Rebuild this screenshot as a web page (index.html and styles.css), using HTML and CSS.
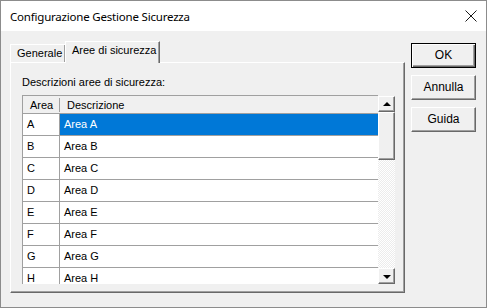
FILE: index.html
```html
<!DOCTYPE html>
<html lang="it">
<head>
<meta charset="utf-8">
<title>Configurazione Gestione Sicurezza</title>
<link rel="stylesheet" href="styles.css">
</head>
<body>
<div class="window">
  <div class="titlebar">
    <span class="title">Configurazione Gestione Sicurezza</span>
    <svg class="close" width="12" height="12" viewBox="0 0 12 12">
      <path d="M0.5 0.5 L11.5 11.5 M11.5 0.5 L0.5 11.5" stroke="#1a1a1a" stroke-width="1" fill="none"/>
    </svg>
  </div>
  <div class="client">
    <div class="tabarea">
      <div class="tabs">
        <div class="tab">Generale</div>
        <div class="tab active">Aree di sicurezza</div>
      </div>
      <div class="page">
        <div class="caption">Descrizioni aree di sicurezza:</div>
        <div class="list">
          <div class="grid">
            <div class="hdr first">Area</div>
            <div class="hdr">Descrizione</div>
            <div class="cell key">A</div><div class="cell sel">Area A</div>
            <div class="cell key">B</div><div class="cell">Area B</div>
            <div class="cell key">C</div><div class="cell">Area C</div>
            <div class="cell key">D</div><div class="cell">Area D</div>
            <div class="cell key">E</div><div class="cell">Area E</div>
            <div class="cell key">F</div><div class="cell">Area F</div>
            <div class="cell key">G</div><div class="cell">Area G</div>
            <div class="cell key">H</div><div class="cell">Area H</div>
          </div>
          <div class="vscroll">
            <div class="sbtn"><span class="arrow up"></span></div>
            <div class="thumb"></div>
            <div class="track"></div>
            <div class="sbtn"><span class="arrow down"></span></div>
          </div>
        </div>
      </div>
    </div>
    <div class="buttons">
      <div class="btn default">OK</div>
      <div class="btn">Annulla</div>
      <div class="btn">Guida</div>
    </div>
  </div>
</div>
</body>
</html>
```

FILE: styles.css
```css
body {
  margin: 0;
  background: #6a6a70;
  font-family: "Liberation Sans", Arial, sans-serif;
  font-size: 11px;
  color: #000;
}

.window {
  width: 485px;
  height: 306px;
  background: #f0f0f0;
  border: 1px solid #8c8c8c;
  overflow: hidden;
}

.titlebar {
  height: 30px;
  background: #fff;
  display: flex;
  align-items: center;
  justify-content: space-between;
  padding: 0 10px 0 9px;
}
.title {
  font-family: "Noto Sans", "Open Sans", sans-serif;
  font-size: 11.5px;
  color: #000;
  letter-spacing: -0.2px;
}
.close {
  margin-right: -1px;
}

.client {
  display: flex;
  padding: 10px 0 0 9px;
}

.tabarea {
  width: 395px;
}
.tabs {
  display: flex;
  align-items: flex-end;
  height: 21px;
}
.tab {
  height: 17px;
  line-height: 17px;
  padding: 0 6px;
  border-top: 1px solid #fff;
  border-left: 1px solid #fff;
  box-shadow: inset -1px 0 0 #a0a0a0;
  width: 42px;
  white-space: nowrap;
  position: relative;
}
.tab.active {
  height: 21px;
  line-height: 17px;
  width: 81px;
  padding: 0 6px;
  margin-bottom: -1px;
  z-index: 1;
  background: #f0f0f0;
  border-right: 1px solid #696969;
  box-shadow: inset -1px 0 0 #a0a0a0;
}

.page {
  border-top: 1px solid #fff;
  border-left: 1px solid #fff;
  border-right: 1px solid #696969;
  border-bottom: 1px solid #696969;
  box-shadow: inset -1px -1px 0 #a0a0a0;
  padding: 13px 9px 0 11px;
  height: 216px;
}
.caption {
  height: 13px;
  line-height: 13px;
  margin-bottom: 6px;
}

.list {
  display: flex;
  height: 189px;
}
.grid {
  flex: 1;
  display: grid;
  grid-template-columns: 37px 1fr;
  grid-template-rows: 18px;
  grid-auto-rows: 22px;
  border-top: 1px solid #a0a0a0;
  border-left: 1px solid #a0a0a0;
  overflow: hidden;
  background: #fff;
}
.hdr {
  background: #f0f0f0;
  border-bottom: 1px solid #a0a0a0;
  height: 16px;
  line-height: 17px;
  padding: 1px 0 0 7px;
  position: relative;
}
.hdr.first {
  padding-left: 0;
  text-align: center;
}
.hdr.first::after {
  content: "";
  position: absolute;
  right: 0;
  top: 2px;
  height: 14px;
  border-right: 1px solid #a0a0a0;
}
.cell {
  border-bottom: 1px solid #a0a0a0;
  line-height: 21px;
  padding-left: 4px;
  height: 21px;
}
.cell.key {
  border-right: 1px solid #a0a0a0;
}
.cell.sel {
  background: #0078d7;
  color: #fff;
}

.vscroll {
  width: 17px;
  margin-top: 1px;
  display: flex;
  flex-direction: column;
}
.sbtn,
.thumb {
  background: #f0f0f0;
  border-top: 1px solid #fff;
  border-left: 1px solid #fff;
  border-right: 1px solid #696969;
  border-bottom: 1px solid #696969;
  box-shadow: inset -1px -1px 0 #a0a0a0;
}
.sbtn {
  height: 14px;
  display: flex;
  align-items: center;
  justify-content: center;
}
.thumb {
  height: 46px;
}
.track {
  flex: 1;
  background-color: #fff;
  background-image: repeating-conic-gradient(#ececec 0 25%, #fff 0 50%);
  background-size: 2px 2px;
}
.arrow {
  width: 0;
  height: 0;
  border-left: 4px solid transparent;
  border-right: 4px solid transparent;
}
.arrow.up {
  border-bottom: 4px solid #000;
  margin-top: -1px;
}
.arrow.down {
  border-top: 4px solid #000;
  margin-top: 1px;
}

.buttons {
  display: flex;
  flex-direction: column;
  gap: 7px;
  margin-left: 6px;
  padding-top: 2px;
}
.btn {
  width: 63px;
  height: 23px;
  line-height: 23px;
  text-align: center;
  background: #f0f0f0;
  border-top: 1px solid #fff;
  border-left: 1px solid #fff;
  border-right: 1px solid #696969;
  border-bottom: 1px solid #696969;
  box-shadow: inset -1px -1px 0 #a0a0a0;
  font-size: 12px;
}
.btn.default {
  border: 1px solid #000;
  box-shadow: inset 1px 1px 0 #fff, inset -1px -1px 0 #696969, inset -2px -2px 0 #a0a0a0;
}
```
